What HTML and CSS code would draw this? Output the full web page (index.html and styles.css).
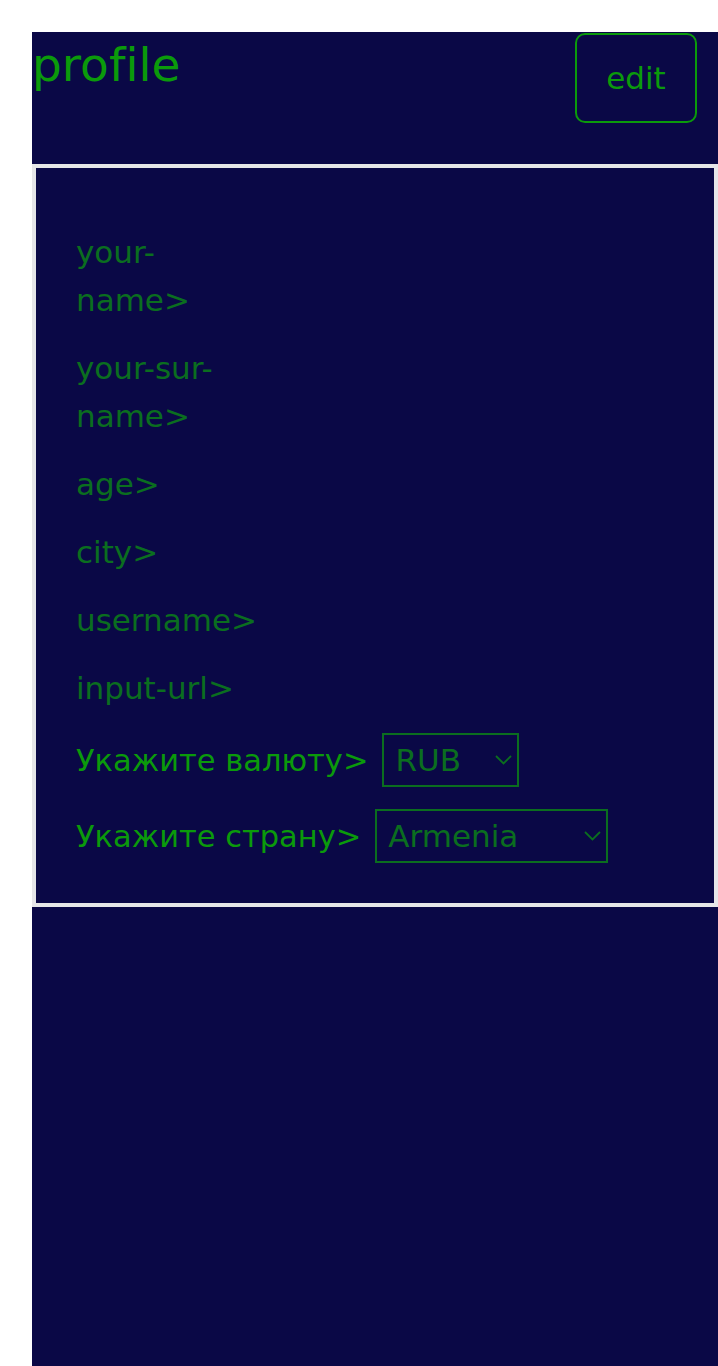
FILE: index.html
```html
<!DOCTYPE html>
<html lang="ru">
<head>
<meta charset="utf-8">
<title>profile</title>
<link rel="stylesheet" href="styles.css">
</head>
<body>
<div class="app">
  <header class="header">
    <h1 class="title">profile</h1>
    <button class="edit-btn" type="button">edit</button>
  </header>
  <section class="card">
    <div class="field">your-name&gt;</div>
    <div class="field">your-sur-name&gt;</div>
    <div class="field">age&gt;</div>
    <div class="field">city&gt;</div>
    <div class="field">username&gt;</div>
    <div class="field">input-url&gt;</div>
    <div class="select-row">
      <label class="select-label" for="currency">Укажите валюту&gt;</label>
      <span class="select-wrap select-wrap--currency">
        <select class="select" id="currency">
          <option>RUB</option>
          <option>EUR</option>
          <option>USD</option>
        </select>
        <svg class="chevron" viewBox="0 0 17 10" aria-hidden="true"><path d="M1 1 L8.5 8.5 L16 1" fill="none" stroke="currentColor" stroke-width="1.8"/></svg>
      </span>
    </div>
    <div class="select-row">
      <label class="select-label" for="country">Укажите страну&gt;</label>
      <span class="select-wrap select-wrap--country">
        <select class="select" id="country">
          <option>Armenia</option>
          <option>Russia</option>
          <option>Belarus</option>
          <option>Ukraine</option>
          <option>Kazakhstan</option>
        </select>
        <svg class="chevron" viewBox="0 0 17 10" aria-hidden="true"><path d="M1 1 L8.5 8.5 L16 1" fill="none" stroke="currentColor" stroke-width="1.8"/></svg>
      </span>
    </div>
  </section>
</div>
</body>
</html>
```

FILE: styles.css
```css
html, body {
  margin: 0;
  padding: 0;
  background: #ffffff;
  overflow: hidden;
}

body {
  font-family: "DejaVu Sans", "Noto Sans", sans-serif;
  font-variant-ligatures: none;
}

.app {
  margin: 32px 0 0 32px;
  min-height: calc(100vh - 32px);
  background: #0a0846;
  display: flex;
  flex-direction: column;
}

.header {
  height: 132px;
  display: flex;
  justify-content: space-between;
  align-items: flex-start;
}

.title {
  margin: 0;
  padding-top: 6px;
  font-size: 47px;
  font-weight: normal;
  line-height: 1.164;
  color: #0b9a0b;
}

.edit-btn {
  margin: 1px 21px 0 0;
  width: 122px;
  height: 90px;
  border: 2px solid #0b9a0b;
  border-radius: 10px;
  background: transparent;
  color: #0b9a0b;
  font-family: inherit;
  font-size: 31px;
  display: flex;
  align-items: center;
  justify-content: center;
  padding: 0;
}

.card {
  border: 4px solid #e6e6e8;
  padding: 60px 40px 39px;
  display: flex;
  flex-direction: column;
  gap: 20px;
}

.field {
  width: 192px;
  font-size: 31px;
  line-height: 48px;
  color: #0b6e1f;
}

.select-row {
  height: 56px;
  display: flex;
  align-items: center;
  gap: 14px;
}

.select-label {
  font-size: 30.5px;
  color: #0b9a0b;
  white-space: nowrap;
}

.select-wrap {
  position: relative;
  display: inline-flex;
  color: #0b6e1f;
}

.select {
  appearance: none;
  -webkit-appearance: none;
  height: 54px;
  border: 2px solid #0b6e1f;
  border-radius: 0;
  background: transparent;
  color: #0b6e1f;
  font-family: inherit;
  font-size: 31px;
  padding: 0 0 0 11px;
  outline: none;
}

.select option {
  background: #0a0846;
  color: #0b6e1f;
}

.select-wrap--currency .select {
  width: 137px;
}

.select-wrap--country .select {
  width: 233px;
}

.chevron {
  position: absolute;
  right: 7px;
  top: 22px;
  width: 17px;
  height: 10px;
  pointer-events: none;
}
```
